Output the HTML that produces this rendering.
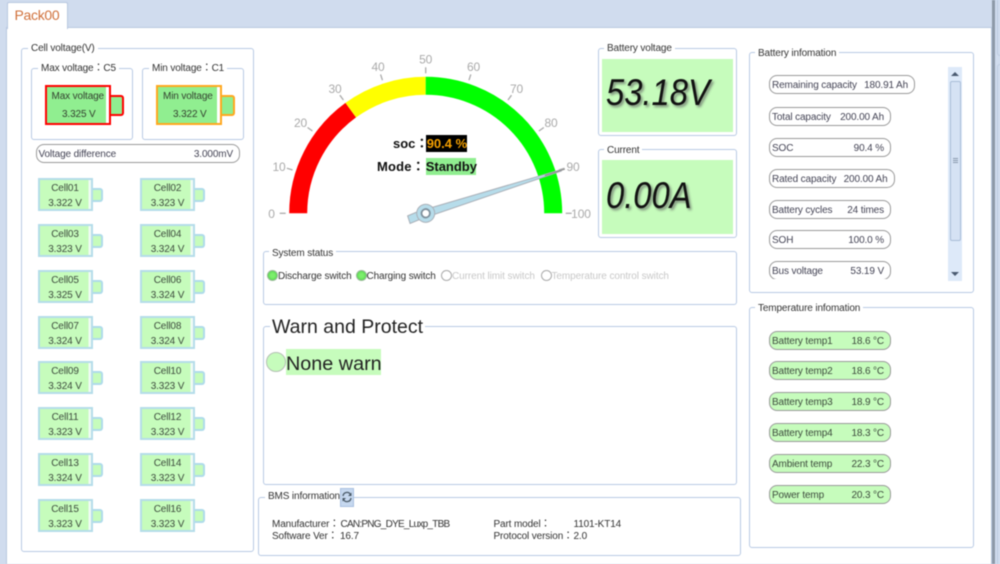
<!DOCTYPE html>
<html><head><meta charset="utf-8">
<style>
html,body{margin:0;padding:0;background:#d0dcee;}
#p{position:relative;width:1000px;height:564px;overflow:hidden;background:#d0dcee;font-family:"Liberation Sans","Noto Sans CJK TC",sans-serif;font-size:10px;letter-spacing:-.13px;color:#333;filter:blur(.4px);}
#p div,#p span.t{position:absolute;box-sizing:border-box;}
.t{position:absolute;white-space:nowrap;line-height:14px;}
.g{border:1.5px solid #b8cae4;border-radius:3px;background:#fff;}
.l{position:absolute;white-space:nowrap;background:#fff;padding:0 3px;line-height:14px;color:#333;}
.c{width:55px;height:33px;background:#c6fcbc;border:2px solid #b5dcea;box-shadow:inset -2.5px 0 #f0fbf4;text-align:center;line-height:15px;color:#3c4a3c;padding-top:1px;white-space:nowrap;}
.c:after{content:"";position:absolute;left:53px;top:8px;width:10px;height:14px;background:#c6fcbc;border:2px solid #aedbea;border-left:0;border-radius:0 3px 3px 0;box-sizing:border-box;}
.c b{display:block;font-weight:normal;}
.q{height:19px;border:1.5px solid #9a9a9a;border-radius:8px;background:#fff;color:#445;line-height:17px;white-space:nowrap;}
.q i{position:absolute;font-style:normal;left:2px;top:1px;}
.q u{position:absolute;text-decoration:none;right:6px;top:1px;}
.h{background:#c6fcbc;color:#3c4a3c;}
.big{font:italic 37px/44px 'Liberation Sans',sans-serif;color:#111;text-shadow:2px 2px 3px #7a8a78;letter-spacing:0;transform:scaleX(.885);transform-origin:0 0;}
.b13{font:bold 13px/16px 'Liberation Sans','Noto Sans CJK TC',sans-serif;color:#111;letter-spacing:0;}
.s{letter-spacing:-.08px;}
</style></head><body>
<div id="p">
<div style="left:992px;top:0;width:3px;height:564px;background:#8d99a8"></div>
<div style="left:997px;top:-4px;width:8px;height:60px;border:1px solid #bccbe0;border-radius:3px"></div>
<div style="left:997px;top:64px;width:8px;height:510px;border:1px solid #bccbe0;border-radius:3px"></div>
<div style="left:6px;top:27px;width:986px;height:540px;background:#fff;border:1.5px solid #b8c8e0"></div>
<div style="left:7px;top:2px;width:60.5px;height:27px;background:#fff;border:1.5px solid #b8c8e0;border-bottom:0;border-radius:2px 2px 0 0"></div>
<span class="t" style="left:14.5px;top:7px;font-size:14px;line-height:17px;letter-spacing:-.3px;color:#d0703a">Pack00</span>

<!-- Cell voltage -->
<div class="g" style="left:21px;top:47.5px;width:232.5px;height:504px"></div>
<span class="l" style="left:28px;top:41.5px">Cell voltage(V)</span>
<div class="g" style="left:31px;top:67.5px;width:102px;height:72px"></div>
<span class="l" style="left:38px;top:61.5px">Max voltage：C5</span>
<div class="g" style="left:142px;top:67.5px;width:102px;height:72px"></div>
<span class="l" style="left:149px;top:61.5px">Min voltage：C1</span>

<div style="left:110px;top:95px;width:13.5px;height:21px;background:#90ee90;border:2px solid #f00;border-left:0;border-radius:0 3px 3px 0"></div>
<div style="left:45px;top:85px;width:66px;height:40px;background:#90ee90;border:2px solid #f00"></div>
<div style="left:105.5px;top:87px;width:3.5px;height:36px;background:#fff"></div>
<span class="t" style="left:51.5px;top:89.5px;color:#33402f">Max voltage</span>
<span class="t" style="left:62px;top:108px;color:#33402f">3.325 V</span>

<div style="left:221px;top:95px;width:13.5px;height:21px;background:#90ee90;border:2px solid #ffa81e;border-left:0;border-radius:0 3px 3px 0"></div>
<div style="left:156px;top:85px;width:66px;height:40px;background:#90ee90;border:2px solid #ffa81e"></div>
<div style="left:216.5px;top:87px;width:3.5px;height:36px;background:#fff"></div>
<span class="t" style="left:163px;top:89.5px;color:#33402f">Min voltage</span>
<span class="t" style="left:173px;top:108px;color:#33402f">3.322 V</span>

<div class="q" style="left:35.5px;top:144px;width:204.5px"><i>Voltage difference</i><u style="right:6px">3.000mV</u></div>

<div class="c" style="left:37.5px;top:178px"><b>Cell01</b><b>3.322 V</b></div>
<div class="c" style="left:140px;top:178px"><b>Cell02</b><b>3.323 V</b></div>
<div class="c" style="left:37.5px;top:224px"><b>Cell03</b><b>3.323 V</b></div>
<div class="c" style="left:140px;top:224px"><b>Cell04</b><b>3.324 V</b></div>
<div class="c" style="left:37.5px;top:269.5px"><b>Cell05</b><b>3.325 V</b></div>
<div class="c" style="left:140px;top:269.5px"><b>Cell06</b><b>3.324 V</b></div>
<div class="c" style="left:37.5px;top:315.5px"><b>Cell07</b><b>3.324 V</b></div>
<div class="c" style="left:140px;top:315.5px"><b>Cell08</b><b>3.324 V</b></div>
<div class="c" style="left:37.5px;top:361px"><b>Cell09</b><b>3.324 V</b></div>
<div class="c" style="left:140px;top:361px"><b>Cell10</b><b>3.323 V</b></div>
<div class="c" style="left:37.5px;top:407px"><b>Cell11</b><b>3.323 V</b></div>
<div class="c" style="left:140px;top:407px"><b>Cell12</b><b>3.323 V</b></div>
<div class="c" style="left:37.5px;top:453px"><b>Cell13</b><b>3.324 V</b></div>
<div class="c" style="left:140px;top:453px"><b>Cell14</b><b>3.323 V</b></div>
<div class="c" style="left:37.5px;top:498.5px"><b>Cell15</b><b>3.323 V</b></div>
<div class="c" style="left:140px;top:498.5px"><b>Cell16</b><b>3.323 V</b></div>

<!-- Gauge -->
<svg style="position:absolute;left:0;top:0" width="1000" height="564" viewBox="0 0 1000 564">
<g fill="none" stroke-width="18">
<path d="M298.2 213.3A127.5 127.5 0 0 1 350.76 110.15" stroke="#f00"/>
<path d="M350.76 110.15A127.5 127.5 0 0 1 425.7 85.8" stroke="#ff0"/>
<path d="M425.7 85.8A127.5 127.5 0 0 1 553.2 213.3" stroke="#0f0"/>
</g>
<g transform="translate(425.7 213.3)" stroke="#aaa" stroke-width="1.3">
<line x1="-146" x2="-140" transform="rotate(0)"/><line x1="-146" x2="-140" transform="rotate(18)"/><line x1="-146" x2="-140" transform="rotate(36)"/><line x1="-146" x2="-140" transform="rotate(54)"/><line x1="-146" x2="-140" transform="rotate(72)"/><line x1="-146" x2="-140" transform="rotate(90)"/><line x1="-146" x2="-140" transform="rotate(108)"/><line x1="-146" x2="-140" transform="rotate(126)"/><line x1="-146" x2="-140" transform="rotate(144)"/><line x1="-146" x2="-140" transform="rotate(162)"/><line x1="-146" x2="-140" transform="rotate(180)"/>
</g>
<g font-family="'Liberation Sans',sans-serif" font-size="12" fill="#aaa" text-anchor="middle">
<text x="271.5" y="218">0</text><text x="279" y="171">10</text><text x="300.5" y="127">20</text><text x="335" y="93">30</text><text x="378" y="71">40</text><text x="425.7" y="63.5">50</text><text x="473.5" y="71">60</text><text x="516.5" y="93">70</text><text x="551" y="127">80</text><text x="573" y="171">90</text><text x="581" y="218">100</text>
</g>
<g transform="translate(425.7 213.3) rotate(-17.6)">
<path d="M-18 -3L-7 -4L142 -0.7L142 0.7L-7 4L-18 5Z" fill="#b6dcea" stroke="#aab0b8" stroke-width="1"/>
<circle r="9" fill="#b6dcea" stroke="#aab0b8" stroke-width="1"/>
<circle r="4.2" fill="#fff" stroke="#7f909c" stroke-width="1.8"/>
<line x1="125" x2="146" stroke="#888" stroke-width="1"/>
</g>
</svg>
<span class="t b13" style="left:393px;top:136px">soc：</span>
<span class="t b13" style="left:377px;top:158.5px;letter-spacing:.2px">Mode：</span>
<div class="b13" style="left:425.7px;top:135px;width:41.5px;height:17px;background:#000;color:#f5a000;white-space:nowrap;padding-left:1px;line-height:17px">90.4 %</div>
<div class="b13" style="left:425.7px;top:157.7px;width:50.5px;height:17.5px;background:#90ee90;white-space:nowrap;line-height:17.5px">Standby</div>

<!-- Voltage / Current -->
<div class="g" style="left:597.5px;top:47.5px;width:139px;height:88px"></div>
<span class="l" style="left:604px;top:42px">Battery voltage</span>
<div style="left:602px;top:59px;width:130.5px;height:72.5px;background:#c6fcbc"></div>
<span class="t big" style="left:606px;top:71px">53.18V</span>
<div class="g" style="left:597.5px;top:149px;width:139px;height:88.5px"></div>
<span class="l" style="left:604px;top:144px">Current</span>
<div style="left:602px;top:160px;width:130.5px;height:73.5px;background:#c6fcbc"></div>
<span class="t big" style="left:606px;top:174px">0.00A</span>

<!-- Battery info -->
<div class="g" style="left:749px;top:51.5px;width:224.5px;height:241.5px"></div>
<span class="l" style="left:755px;top:47px">Battery infomation</span>
<div class="q" style="left:769px;top:75px;width:146px"><i>Remaining capacity</i><u>180.91 Ah</u></div>
<div class="q" style="left:769px;top:106.5px;width:122px"><i>Total capacity</i><u>200.00 Ah</u></div>
<div class="q" style="left:769px;top:137.5px;width:122px"><i>SOC</i><u>90.4 %</u></div>
<div class="q" style="left:769px;top:168.5px;width:125.5px"><i>Rated capacity</i><u>200.00 Ah</u></div>
<div class="q" style="left:769px;top:199.5px;width:122px"><i>Battery cycles</i><u>24 times</u></div>
<div class="q" style="left:769px;top:230px;width:122px"><i>SOH</i><u>100.0 %</u></div>
<div style="left:765px;top:261px;width:130px;height:18px;overflow:hidden"><div class="q" style="left:4px;top:0;width:122px"><i>Bus voltage</i><u>53.19 V</u></div></div>
<div style="left:948px;top:67px;width:14px;height:214px;background:#dde9f9"></div>
<div style="left:949.5px;top:81px;width:11.5px;height:160px;background:#d5e2f4;border:1px solid #a9bdd8;border-radius:2px"></div>
<div style="left:952.5px;top:158px;width:5px;height:1px;background:#8a9aae"></div>
<div style="left:952.5px;top:160px;width:5px;height:1px;background:#8a9aae"></div>
<div style="left:952.5px;top:162px;width:5px;height:1px;background:#8a9aae"></div>
<svg style="position:absolute;left:948px;top:67px" width="14" height="214"><path d="M3 9L7 5L11 9Z" fill="#4a5a70"/><path d="M3 205L11 205L7 209Z" fill="#4a5a70"/></svg>

<!-- System status -->
<div class="g" style="left:262.5px;top:251px;width:474px;height:53.5px"></div>
<span class="l" style="left:269px;top:247px">System status</span>
<div style="left:267px;top:270px;width:11px;height:11px;border-radius:50%;background:#7cee6c;border:1.5px solid #9ab89a;box-shadow:inset 0 0 2px #2fbf2f"></div>
<span class="t" style="left:278px;top:270px;color:#333">Discharge switch</span>
<div style="left:355.5px;top:270px;width:11px;height:11px;border-radius:50%;background:#7cee6c;border:1.5px solid #9ab89a;box-shadow:inset 0 0 2px #2fbf2f"></div>
<span class="t" style="left:366.5px;top:270px;color:#333">Charging switch</span>
<div style="left:441px;top:270px;width:11px;height:11px;border-radius:50%;background:#fff;border:1.5px solid #aaa"></div>
<span class="t s" style="left:452px;top:270px;color:#c8c8c8">Current limit switch</span>
<div style="left:540.5px;top:270px;width:11px;height:11px;border-radius:50%;background:#fff;border:1.5px solid #aaa"></div>
<span class="t s" style="left:551.5px;top:270px;color:#c8c8c8">Temperature control switch</span>

<!-- Warn -->
<div class="g" style="left:262.5px;top:325.5px;width:474px;height:159px"></div>
<span class="l" style="left:270px;top:315px;font-size:19.5px;line-height:24px;letter-spacing:0;color:#222;padding:0 2px">Warn and Protect</span>
<div style="left:266px;top:352px;width:20px;height:20px;border-radius:50%;background:#c6fcbc;border:1.5px solid #b4c0b4"></div>
<div style="left:286px;top:349px;width:94.5px;height:26px;background:#c6fcbc;font-size:19.8px;letter-spacing:0;line-height:30px;color:#222;white-space:nowrap">None warn</div>

<!-- BMS -->
<div class="g" style="left:258px;top:497px;width:482.5px;height:59px"></div>
<span class="l" style="left:265px;top:489.5px">BMS information</span>
<div style="left:340px;top:488px;width:13.5px;height:19px;background:#c6d8ef;border:1px solid #a9c0e0"></div>
<svg style="position:absolute;left:341px;top:491px" width="12" height="12" viewBox="0 0 12 12"><path d="M2 5A4 4 0 0 1 9.500 3.500M10 7A4 4 0 0 1 2.500 8.500" fill="none" stroke="#4a5a68" stroke-width="1.3"/><path d="M10.500 1.500V5H7ZM1.500 10.500V7H5Z" fill="#4a5a68"/></svg>
<span class="t" style="left:272px;top:517.5px">Manufacturer：</span>
<span class="t" style="left:340.5px;top:517.5px;letter-spacing:-.75px">CAN:PNG_DYE_Luxp_TBB</span>
<span class="t" style="left:272px;top:530px">Software Ver：</span>
<span class="t" style="left:340px;top:530px">16.7</span>
<span class="t" style="left:493.5px;top:517.5px">Part model：</span>
<span class="t" style="left:573.5px;top:517.5px">1101-KT14</span>
<span class="t" style="left:493.5px;top:530px">Protocol version：</span>
<span class="t" style="left:573.5px;top:530px">2.0</span>

<!-- Temperature -->
<div class="g" style="left:749px;top:306.5px;width:224.5px;height:241px"></div>
<span class="l" style="left:755px;top:302px">Temperature infomation</span>
<div class="q h" style="left:769px;top:330.5px;width:122px"><i>Battery temp1</i><u>18.6 °C</u></div>
<div class="q h" style="left:769px;top:361px;width:122px"><i>Battery temp2</i><u>18.6 °C</u></div>
<div class="q h" style="left:769px;top:392px;width:122px"><i>Battery temp3</i><u>18.9 °C</u></div>
<div class="q h" style="left:769px;top:423px;width:122px"><i>Battery temp4</i><u>18.3 °C</u></div>
<div class="q h" style="left:769px;top:454px;width:122px"><i>Ambient temp</i><u>22.3 °C</u></div>
<div class="q h" style="left:769px;top:485px;width:122px"><i>Power temp</i><u>20.3 °C</u></div>
</div>
</body></html>
